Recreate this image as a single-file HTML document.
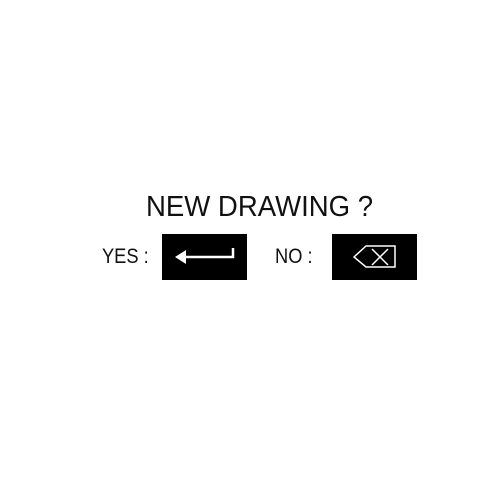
<!DOCTYPE html>
<html><head><style>
body{margin:0;width:500px;height:500px;background:#fff;position:relative;font-family:"Liberation Sans",Arial,sans-serif;color:#111}
.t{position:absolute;white-space:nowrap}
.b{position:absolute;background:#000;top:234px;width:85px;height:46px}
</style></head><body>
<div class="t" style="left:146px;top:191px;font-size:29px;transform:scaleX(0.95);transform-origin:left">NEW DRAWING ?</div>
<div class="t" style="left:102px;top:245px;font-size:21px;transform:scaleX(0.87);transform-origin:left">YES :</div>
<div class="t" style="left:275px;top:245px;font-size:21px;transform:scaleX(0.87);transform-origin:left">NO :</div>
<div class="b" style="left:162px"></div>
<div class="b" style="left:332px"></div>
<svg width="500" height="500" style="position:absolute;left:0;top:0">
<path d="M184 257H233V248" fill="none" stroke="#fff" stroke-width="2.5"/>
<path d="M175 257L186 250V264Z" fill="#fff"/>
<path d="M354 257L366 246H395V267H366Z" fill="none" stroke="#fff" stroke-width="1.5"/>
<path d="M372 249L388 265M388 249L372 265" stroke="#fff" stroke-width="1.5"/>
</svg>
</body></html>
